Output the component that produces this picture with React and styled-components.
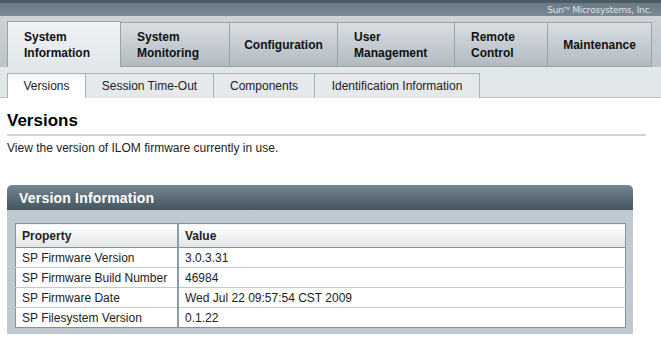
import React from 'react';
import styled, { createGlobalStyle } from 'styled-components';

const tabs = [
  { id: 1, name: ['System', 'Information'], width: 114, active: true },
  { id: 2, name: ['System', 'Monitoring'], width: 109 },
  { id: 3, name: ['Configuration'], width: 108, center: true },
  { id: 4, name: ['User', 'Management'], width: 117 },
  { id: 5, name: ['Remote', 'Control'], width: 93 },
  { id: 6, name: ['Maintenance'], width: 104, center: true },
];

const subTabs = [
  { id: 1, name: 'Versions', width: 79, active: true },
  { id: 2, name: 'Session Time-Out', width: 128 },
  { id: 3, name: 'Components', width: 101 },
  { id: 4, name: 'Identification Information', width: 165 },
];

const rows = [
  ['SP Firmware Version', '3.0.3.31'],
  ['SP Firmware Build Number', '46984'],
  ['SP Firmware Date', 'Wed Jul 22 09:57:54 CST 2009'],
  ['SP Filesystem Version', '0.1.22'],
];

const GlobalStyle = createGlobalStyle`
  body {
    margin: 0;
    background: #fff;
    font-family: 'Liberation Sans', Arial, sans-serif;
    color: #000;
  }
`;

function App() {
  return (
    <Page>
      <GlobalStyle />
      <Masthead>
        <span className='brand'>
          Sun<sup>TM</sup> Microsystems, Inc.
        </span>
      </Masthead>

      <TabBar>
        {tabs.map((tab) => (
          <Tab key={tab.id} $active={tab.active} $width={tab.width} $center={tab.center}>
            {tab.name.map((line) => (
              <span key={line}>{line}</span>
            ))}
          </Tab>
        ))}
      </TabBar>

      <SubTabBar>
        {subTabs.map((tab) => (
          <SubTab key={tab.id} $active={tab.active} $width={tab.width}>
            {tab.name}
          </SubTab>
        ))}
      </SubTabBar>

      <Content>
        <Heading>Versions</Heading>
        <Description>View the version of ILOM firmware currently in use.</Description>

        <Panel>
          <PanelHeader>Version Information</PanelHeader>
          <PanelBody>
            <Table>
              <thead>
                <tr>
                  <th>Property</th>
                  <th>Value</th>
                </tr>
              </thead>
              <tbody>
                {rows.map(([prop, value]) => (
                  <tr key={prop}>
                    <td>{prop}</td>
                    <td>{value}</td>
                  </tr>
                ))}
              </tbody>
            </Table>
          </PanelBody>
        </Panel>
      </Content>
    </Page>
  );
}

const Page = styled.div`
  width: 661px;
  height: 343px;
  overflow: hidden;
`;

const Masthead = styled.div`
  height: 16px;
  box-sizing: border-box;
  border-top: 3px solid #4a5b66;
  background: linear-gradient(#6b7b86, #7a8892);
  display: flex;
  justify-content: flex-end;
  align-items: center;
  padding-right: 9px;

  .brand {
    font-family: 'DejaVu Sans', sans-serif;
    font-size: 9px;
    color: #dde3e7;
    letter-spacing: -0.2px;
  }
  sup {
    font-size: 4px;
    vertical-align: 3px;
    letter-spacing: 0;
  }
`;

const TabBar = styled.div`
  height: 51px;
  box-sizing: border-box;
  padding: 5px 0 0 7px;
  display: flex;
  align-items: flex-start;
  background: linear-gradient(#cdd3d7, #bcc4ca);
`;

const Tab = styled.div`
  width: ${(p) => p.$width}px;
  height: ${(p) => (p.$active ? 46 : 45)}px;
  margin-top: ${(p) => (p.$active ? 0 : 1)}px;
  box-sizing: border-box;
  border: 1px solid #9aa3a9;
  border-left: ${(p) => (p.$active ? '1px solid #9aa3a9' : 'none')};
  border-bottom: ${(p) => (p.$active ? 'none' : '1px solid #9aa3a9')};
  background: ${(p) =>
    p.$active
      ? 'linear-gradient(#eef1f3, #e2e7ea)'
      : 'linear-gradient(#d9dee2, #b2bac0)'};
  display: flex;
  flex-direction: column;
  justify-content: center;
  align-items: ${(p) => (p.$center ? 'center' : 'flex-start')};
  padding-left: ${(p) => (p.$center ? 0 : 16)}px;
  font-size: 12px;
  font-weight: bold;
  line-height: 16px;
  color: #111;
`;

const SubTabBar = styled.div`
  height: 31px;
  box-sizing: border-box;
  padding: 6px 0 0 7px;
  display: flex;
  background: #e2e7ea;
  border-bottom: 1px solid #b9c0c5;
`;

const SubTab = styled.div`
  width: ${(p) => p.$width}px;
  height: 25px;
  box-sizing: border-box;
  border: 1px solid #a9b1b6;
  border-left: ${(p) => (p.$active ? '1px solid #a9b1b6' : 'none')};
  border-bottom: none;
  background: ${(p) => (p.$active ? 'linear-gradient(#f2f4f5, #ffffff 40%)' : '#e5e9ec')};
  display: flex;
  align-items: center;
  justify-content: center;
  font-size: 12px;
  color: #222;
`;

const Content = styled.div`
  padding: 0 15px 0 7px;
`;

const Heading = styled.h1`
  margin: 13px 0 0;
  padding-bottom: 3px;
  font-size: 17px;
  font-weight: bold;
  line-height: 20px;
  border-bottom: 2px solid #cfd4d8;
`;

const Description = styled.p`
  margin: 5px 0 0;
  font-size: 12px;
  color: #222;
  line-height: 14px;
`;

const Panel = styled.div`
  width: 626px;
  margin-top: 30px;
`;

const PanelHeader = styled.div`
  height: 25px;
  box-sizing: border-box;
  padding-left: 12px;
  border-radius: 5px 5px 0 0;
  background: linear-gradient(#768690, #435660);
  color: #fff;
  font-size: 14px;
  font-weight: bold;
  display: flex;
  align-items: center;
  letter-spacing: 0.2px;
`;

const PanelBody = styled.div`
  background: #c0c9cf;
  padding: 13px 7px 6px 8px;
`;

const Table = styled.table`
  width: 100%;
  border-collapse: collapse;
  background: #fff;
  font-size: 12px;
  border: 1px solid #7f939b;

  th {
    height: 23px;
    text-align: left;
    padding: 0 0 0 6px;
    font-weight: bold;
    color: #222;
    background: linear-gradient(#ffffff, #e2e5e8);
    border-bottom: 1px solid #7f939b;
  }
  th:first-child,
  td:first-child {
    width: 155px;
    border-right: 2px solid #8a9ca4;
  }
  td {
    height: 19px;
    padding: 0 0 0 6px;
    color: #222;
    border-bottom: 1px solid #c0c9cf;
  }
  tr:last-child td {
    border-bottom: none;
  }
`;

export default App;
